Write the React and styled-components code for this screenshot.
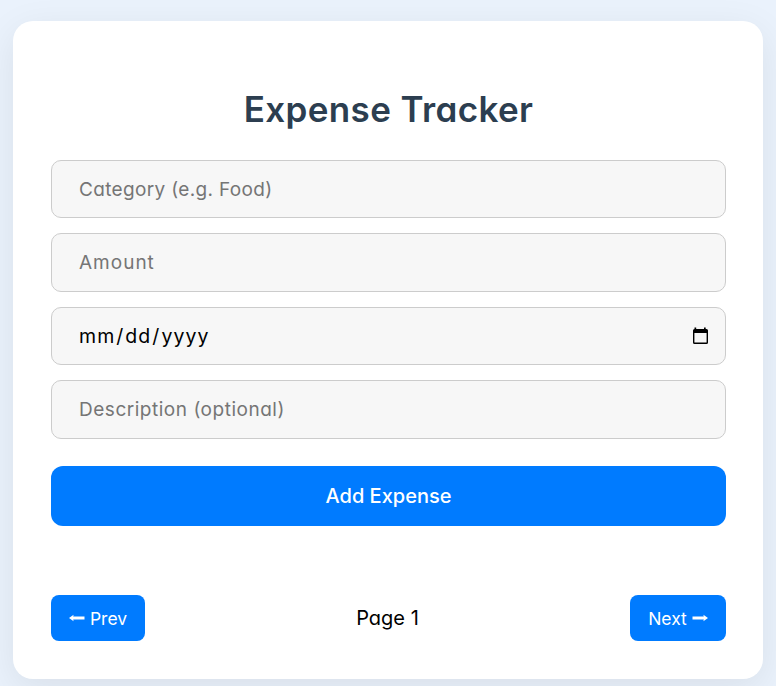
import React from "react";
import styled, { createGlobalStyle } from "styled-components";

const GlobalStyle = createGlobalStyle`
  * { box-sizing: border-box; }
  body {
    margin: 0;
    min-height: 686px;
    overflow: hidden;
    background: #eaf2fc;
    font-family: Inter, "Open Sans", sans-serif;
    font-feature-settings: "cv11";
    color: #000;
  }
`;

const Card = styled.main`
  width: 750px;
  height: 658px;
  margin: 21px 0 0 13px;
  padding: 64px 37px 38px 38px;
  display: flex;
  flex-direction: column;
  background: #fff;
  border-radius: 20px;
  box-shadow: 0 10px 38px rgba(0, 0, 0, 0.08);
`;

const Title = styled.h1`
  margin: 0 0 27px;
  height: 48px;
  line-height: 48px;
  text-align: center;
  font-size: 35px;
  font-weight: 600;
  letter-spacing: 0.38px;
  color: #2c3e50;
`;

const Form = styled.form`
  display: flex;
  flex-direction: column;
  gap: 15px;
`;

const Field = styled.label`
  height: ${(p) => p.$height || 58}px;
  padding: 0 16px 0 27px;
  display: flex;
  align-items: center;
  justify-content: space-between;
  border: 1px solid #ccc;
  border-radius: 10px;
  background: #f7f7f7;
  font-size: 19px;
`;

const Hint = styled.span`
  color: #757575;
  letter-spacing: ${(p) => p.$spacing || 0}px;
  white-space: nowrap;
`;

const DateParts = styled.span`
  display: flex;
  gap: 1px;
  padding-bottom: 1px;
  color: #000;
  font-size: 19.5px;
  letter-spacing: 1.05px;
`;

const Button = styled.button`
  display: flex;
  align-items: center;
  justify-content: center;
  border: 0;
  padding: 0;
  background: #007bff;
  color: #fff;
  font: inherit;
  font-feature-settings: inherit;
`;

const SubmitButton = styled(Button)`
  height: 60px;
  margin-top: 12px;
  border-radius: 12px;
  font-size: 20px;
  font-weight: 500;
`;

const Pagination = styled.nav`
  margin-top: 69px;
  display: flex;
  justify-content: space-between;
  align-items: center;
`;

const PageButton = styled(Button)`
  width: ${(p) => p.$width}px;
  height: 46px;
  gap: 5px;
  border-radius: 8px;
  font-size: 17.5px;
`;

const PageLabel = styled.span`
  font-size: 20px;
`;

const Arrow = styled.svg`
  width: 16px;
  height: 8px;
  fill: currentColor;
  transform: ${(p) => (p.$flip ? "scaleX(-1)" : "none")};
`;

const ArrowIcon = ({ flip }) => (
  <Arrow viewBox="0 0 16 8" $flip={flip} aria-hidden="true">
    <path d="M0 4 L4.6 0.8 L4.2 2.5 H15.5 V5.5 H4.2 L4.6 7.2 Z" />
  </Arrow>
);

const CalendarIcon = () => (
  <svg width="17" height="18" viewBox="0 0 17 18" aria-hidden="true">
    <path
      fillRule="evenodd"
      d="M2.5 0.5H4.2V2H12V0.5H13.7V2H14.5A1.5 1.5 0 0 1 16 3.5V15.5A1.5 1.5 0 0 1 14.5 17H2.5A1.5 1.5 0 0 1 1 15.5V3.5A1.5 1.5 0 0 1 2.5 2ZM2.4 6V15.5H14.6V6Z"
    />
  </svg>
);

export default function App() {
  return (
    <>
      <GlobalStyle />
      <Card>
        <Title>Expense Tracker</Title>
        <Form>
          <Field><Hint $spacing={0.34}>Category (e.g. Food)</Hint></Field>
          <Field $height={59}><Hint $spacing={1}>Amount</Hint></Field>
          <Field>
            <DateParts>
              <span>mm</span><span>/</span><span>dd</span><span>/</span><span>yyyy</span>
            </DateParts>
            <CalendarIcon />
          </Field>
          <Field $height={59}><Hint $spacing={0.52}>Description (optional)</Hint></Field>
          <SubmitButton type="button">Add Expense</SubmitButton>
        </Form>
        <Pagination>
          <PageButton $width={94}><ArrowIcon />Prev</PageButton>
          <PageLabel>Page 1</PageLabel>
          <PageButton $width={96}>Next<ArrowIcon flip /></PageButton>
        </Pagination>
      </Card>
    </>
  );
}
